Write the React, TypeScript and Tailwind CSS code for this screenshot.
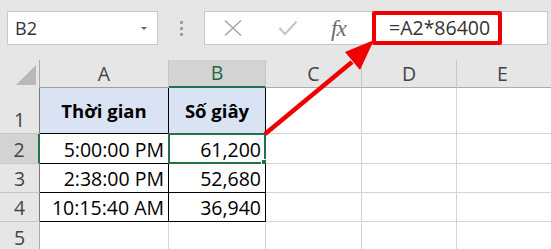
import React from "react";

type CellProps = {
  children?: React.ReactNode;
  className?: string;
};

function Cell({ children, className = "" }: CellProps) {
  return <div className={`relative box-border flex ${className}`}>{children}</div>;
}

export default function App() {
  const rows = [
    { n: "2", a: "5:00:00 PM", b: "61,200" },
    { n: "3", a: "2:38:00 PM", b: "52,680" },
    { n: "4", a: "10:15:40 AM", b: "36,940" },
  ];
  return (
    <div className="relative w-[551px] h-[249px] overflow-hidden bg-[#e6e6e6] font-['Open_Sans',sans-serif]">
      {/* formula bar */}
      <div className="h-[60px] flex items-start pt-[11px] pl-[7px]">
        <div className="w-[151px] h-[34px] bg-white border border-[#c8c8c8] flex items-center justify-between pl-[7px] pr-[10px]">
          <span className="text-[18px] text-[#333] leading-none">B2</span>
          <span className="w-0 h-0 border-l-[3px] border-r-[3px] border-t-[3px] border-l-transparent border-r-transparent border-t-[#666]"></span>
        </div>
        <div className="w-[46px] h-[34px] flex flex-col items-center justify-center gap-[3px]">
          <span className="w-[3px] h-[3px] bg-[#a0a0a0]"></span>
          <span className="w-[3px] h-[3px] bg-[#a0a0a0]"></span>
          <span className="w-[3px] h-[3px] bg-[#a0a0a0]"></span>
        </div>
        <div className="flex-1 mr-[3px] h-[34px] bg-white border border-[#c8c8c8] flex items-center">
          <div className="w-[167px] h-full flex items-center">
            <svg width="20" height="18" viewBox="0 0 20 18" className="ml-[18px]">
              <path d="M2 1.5 L18 16.5 M18 1.5 L2 16.5" stroke="#a6a6a6" strokeWidth="1.6" fill="none" />
            </svg>
            <svg width="20" height="16" viewBox="0 0 20 16" className="ml-[35px]">
              <path d="M1.5 8 L7 14 L18.5 1.5" stroke="#c4c4c4" strokeWidth="2" fill="none" />
            </svg>
            <span className="ml-[33px] text-[23px] italic text-[#6b6b6b] font-['Liberation_Serif',serif] leading-none tracking-[-1px]">
              fx
            </span>
          </div>
          <div className="w-[130px] h-[34px] -my-px border-[4px] border-[#f00000] rounded-[2px] flex items-center pl-[13px]">
            <span className="text-[19.5px] text-[#333] leading-none">=A2*86400</span>
          </div>
        </div>
      </div>

      {/* grid */}
      <div className="grid grid-cols-[40px_129px_97px_96px_95px_1fr] grid-rows-[28px_46px_30px_29px_29px_29px] text-[19.5px] text-black leading-[26px]">
        {/* header row */}
        <Cell className="bg-[#e6e6e6] border-r border-[#ababab]">
          <svg width="22" height="22" viewBox="0 0 22 22" className="absolute left-[15px] top-[4px]">
            <polygon points="21,1 21,21 1,21" fill="#b9b9b9" />
          </svg>
        </Cell>
        <Cell className="bg-[#e6e6e6] border-r border-b border-r-[#c6c6c6] border-b-[#9e9e9e] items-end justify-center text-[#444]">
          A
        </Cell>
        <Cell className="bg-[#d3d3d3] border-r border-b-2 border-r-[#c6c6c6] border-b-[#217346] items-end justify-center text-[#1e6b41]">
          B
        </Cell>
        <Cell className="bg-[#e6e6e6] border-r border-b border-r-[#c6c6c6] border-b-[#ababab] items-end justify-center text-[#444]">
          C
        </Cell>
        <Cell className="bg-[#e6e6e6] border-r border-b border-r-[#c6c6c6] border-b-[#ababab] items-end justify-center text-[#444]">
          D
        </Cell>
        <Cell className="bg-[#e6e6e6] border-b border-b-[#ababab] items-end pl-[40px] text-[#444]">
          E
        </Cell>

        {/* row 1 */}
        <Cell className="bg-[#e6e6e6] border-r border-b border-r-[#7a7a7a] border-b-[#c6c6c6] items-end justify-center text-[#444]">
          1
        </Cell>
        <Cell className="bg-[#dae3f3] border-r border-b border-black items-center justify-center font-bold text-[18.5px]">
          Thời gian
        </Cell>
        <Cell className="bg-[#dae3f3] border-r border-b border-black items-center justify-center font-bold text-[18.5px]">
          Số giây
        </Cell>
        <Cell className="bg-white border-r border-b border-[#d4d4d4]" />
        <Cell className="bg-white border-r border-b border-[#d4d4d4]" />
        <Cell className="bg-white border-b border-[#d4d4d4]" />

        {rows.map((r) => {
          const sel = r.n === "2";
          return (
            <React.Fragment key={r.n}>
              <Cell
                className={`border-b border-b-[#c6c6c6] items-end justify-center ${
                  sel ? "bg-[#d3d3d3] border-r-2 border-r-[#217346] text-[#444]" : "bg-[#e6e6e6] border-r border-r-[#7a7a7a] text-[#444]"
                }`}
              >
                {r.n}
              </Cell>
              <Cell className="bg-white border-r border-b border-black items-end justify-end pr-[4px]">
                {r.a}
              </Cell>
              <Cell className="bg-white border-r border-b border-black items-end justify-end pr-[4px]">
                {r.b}
                {sel && (
                  <>
                    <div className="absolute -left-px -top-px -right-px -bottom-px border-2 border-[#217346]"></div>
                    <div className="absolute -right-[4px] -bottom-[4px] w-[6px] h-[6px] bg-[#217346] border border-white box-content"></div>
                  </>
                )}
              </Cell>
              <Cell className="bg-white border-r border-b border-[#d4d4d4]" />
              <Cell className="bg-white border-r border-b border-[#d4d4d4]" />
              <Cell className="bg-white border-b border-[#d4d4d4]" />
            </React.Fragment>
          );
        })}

        {/* row 5 */}
        <Cell className="bg-[#e6e6e6] border-r border-r-[#ababab] items-end justify-center text-[#444]">
          5
        </Cell>
        <Cell className="bg-white border-r border-[#d4d4d4]" />
        <Cell className="bg-white border-r border-[#d4d4d4]" />
        <Cell className="bg-white border-r border-[#d4d4d4]" />
        <Cell className="bg-white border-r border-[#d4d4d4]" />
        <Cell className="bg-white" />
      </div>

      {/* arrow overlay */}
      <svg className="absolute left-0 top-0 pointer-events-none" width="551" height="249" viewBox="0 0 551 249">
        <line x1="265" y1="134" x2="352" y2="62" stroke="#f00000" strokeWidth="4.5" />
        <polygon points="374,40 345,52 360,70" fill="#f00000" />
      </svg>
    </div>
  );
}
